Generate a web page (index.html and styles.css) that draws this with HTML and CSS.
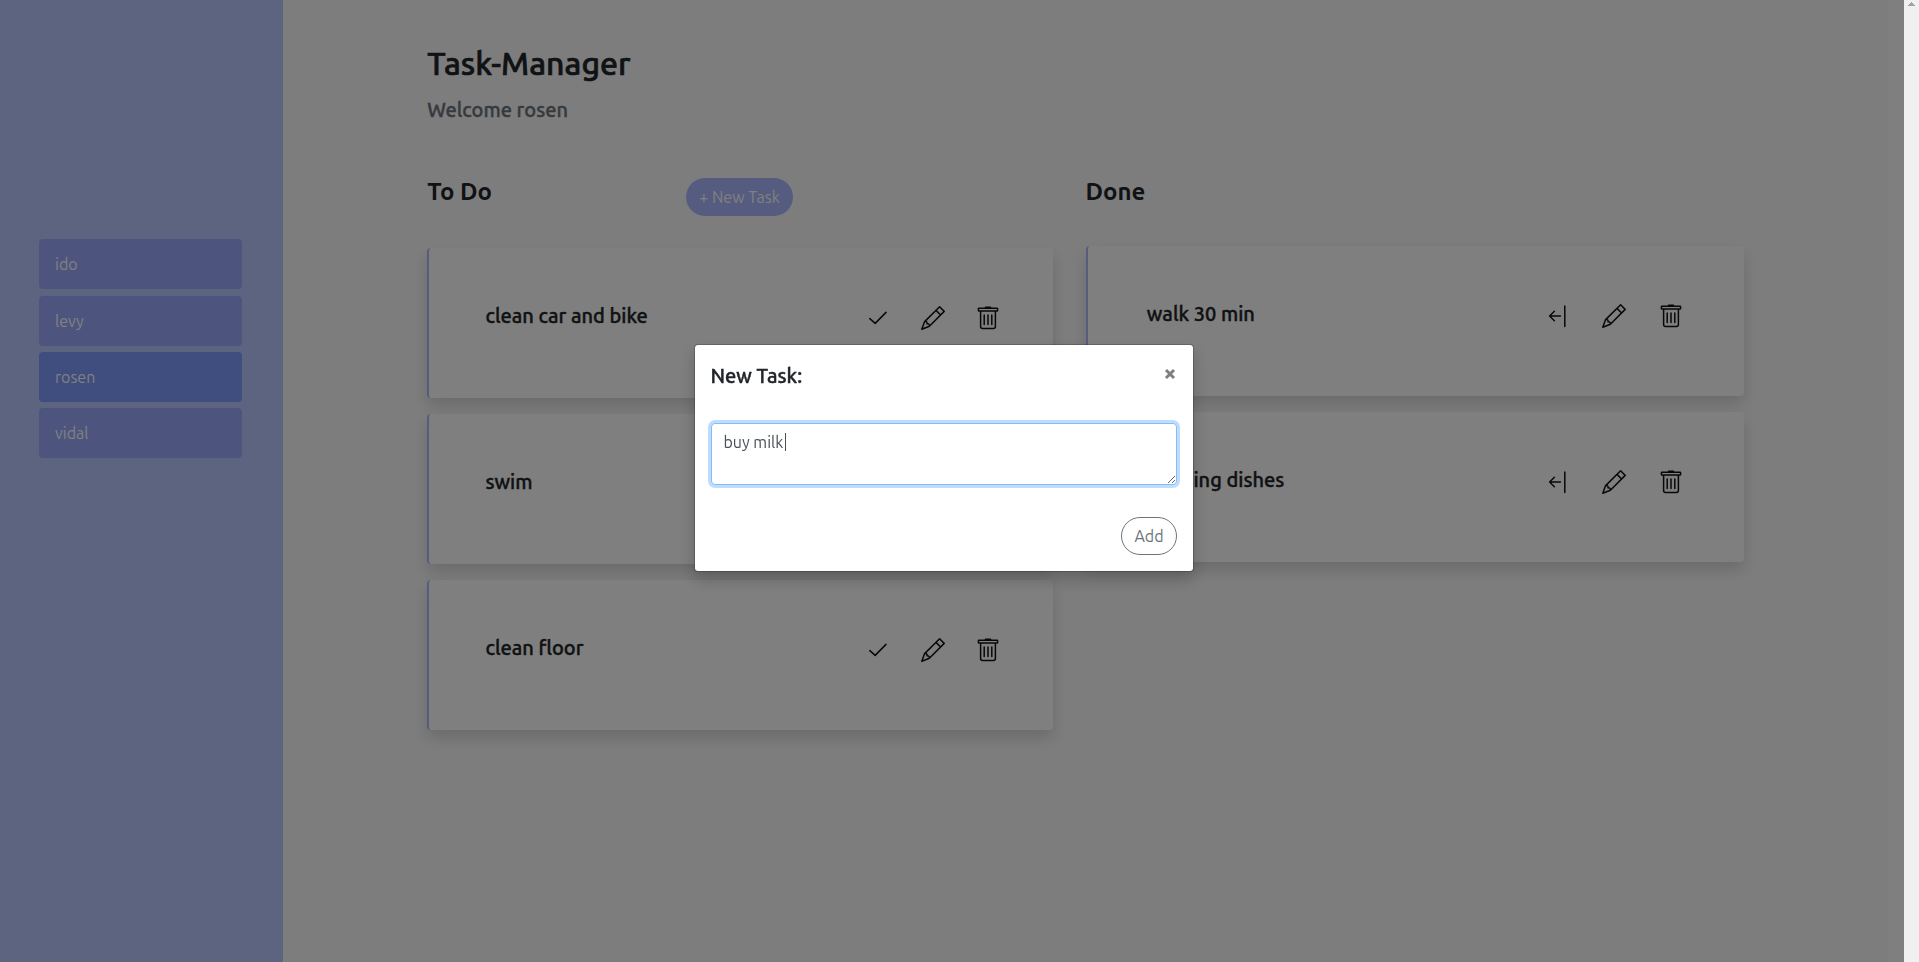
FILE: index.html
```
<!DOCTYPE html>
<html lang="en">
<head>
<meta charset="utf-8">
<title>Task-Manager</title>
<link rel="stylesheet" href="styles.css">
</head>
<body>
<svg class="sprite" aria-hidden="true">
  <symbol id="check" viewBox="0 0 24 24"><path d="M3.8 12.6 9.2 17.4 20 6.4"/></symbol>
  <symbol id="back" viewBox="0 0 24 24"><path d="M9.4 7.2 4.6 12l4.8 4.8M4.6 12H15.4M19.8 2v20.4"/></symbol>
  <symbol id="pencil" viewBox="0 0 24 24"><path d="M.8 23.2 3.6 15.6 18.6.8 23.2 5.4 8.4 20.2ZM15 4.4 19.6 9M3.6 15.6C6 15.4 6.2 16 6 17.8 7.8 17.8 8.6 18.2 8.4 20.2"/></symbol>
  <symbol id="trash" viewBox="0 0 24 24"><path d="M3 2.2H21Q21.6 2.2 21.6 2.8V4.4Q21.6 5 21 5H3Q2.4 5 2.4 4.4V2.8Q2.4 2.2 3 2.2ZM9.5 1.2H14.5M4.6 5.2V20.6Q4.6 22.6 6.6 22.6H17.4Q19.4 22.6 19.4 20.6V5.2M8.2 9V18.6M12 9V18.6M15.8 9V18.6"/></symbol>
</svg>
<div class="page">
  <nav class="sidebar">
    <a class="user" href="#">ido</a>
    <a class="user" href="#">levy</a>
    <a class="user active" href="#">rosen</a>
    <a class="user" href="#">vidal</a>
  </nav>
  <main class="main">
    <h1 class="title">Task-Manager</h1>
    <h2 class="welcome">Welcome rosen</h2>
    <div class="board">
      <section class="column todo">
        <header class="column-head">
          <h3 class="column-title">To Do</h3>
          <button class="new-task" type="button">+ New Task</button>
        </header>
        <ul class="tasks">
          <li class="card"><h4 class="task">clean car and bike</h4><div class="actions">
            <button class="action" type="button" aria-label="Done"><svg class="icon"><use href="#check"/></svg></button>
            <button class="action" type="button" aria-label="Edit"><svg class="icon"><use href="#pencil"/></svg></button>
            <button class="action" type="button" aria-label="Delete"><svg class="icon"><use href="#trash"/></svg></button></div></li>
          <li class="card"><h4 class="task">swim</h4><div class="actions">
            <button class="action" type="button" aria-label="Done"><svg class="icon"><use href="#check"/></svg></button>
            <button class="action" type="button" aria-label="Edit"><svg class="icon"><use href="#pencil"/></svg></button>
            <button class="action" type="button" aria-label="Delete"><svg class="icon"><use href="#trash"/></svg></button></div></li>
          <li class="card"><h4 class="task">clean floor</h4><div class="actions">
            <button class="action" type="button" aria-label="Done"><svg class="icon"><use href="#check"/></svg></button>
            <button class="action" type="button" aria-label="Edit"><svg class="icon"><use href="#pencil"/></svg></button>
            <button class="action" type="button" aria-label="Delete"><svg class="icon"><use href="#trash"/></svg></button></div></li>
        </ul>
      </section>
      <section class="column done">
        <header class="column-head">
          <h3 class="column-title">Done</h3>
        </header>
        <ul class="tasks">
          <li class="card"><h4 class="task">walk 30 min</h4><div class="actions">
            <button class="action" type="button" aria-label="Move back"><svg class="icon"><use href="#back"/></svg></button>
            <button class="action" type="button" aria-label="Edit"><svg class="icon"><use href="#pencil"/></svg></button>
            <button class="action" type="button" aria-label="Delete"><svg class="icon"><use href="#trash"/></svg></button></div></li>
          <li class="card"><h4 class="task">washing dishes</h4><div class="actions">
            <button class="action" type="button" aria-label="Move back"><svg class="icon"><use href="#back"/></svg></button>
            <button class="action" type="button" aria-label="Edit"><svg class="icon"><use href="#pencil"/></svg></button>
            <button class="action" type="button" aria-label="Delete"><svg class="icon"><use href="#trash"/></svg></button></div></li>
        </ul>
      </section>
    </div>
  </main>
</div>
<div class="overlay">
  <form class="modal" role="dialog" aria-labelledby="modal-title">
    <header class="modal-head">
      <h2 class="modal-title"><label id="modal-title" for="task-text">New Task:</label></h2>
      <button class="close" type="button" aria-label="Close"><svg class="close-icon" viewBox="0 0 10 10"><path d="M1 1 9 9M9 1 1 9"/></svg></button>
    </header>
    <div class="field">
      <textarea class="text" id="task-text" rows="2">buy milk</textarea>
      <span class="caret"></span>
    </div>
    <footer class="modal-foot"><button class="add" type="button">Add</button></footer>
  </form>
</div>
<div class="scrollbar"><svg class="scroll-arrow" viewBox="0 0 7 4"><path d="M3 0h1v1h1v1h1v1h1v1H0V3h1V2h1V1h1z"/></svg></div>
</body>
</html>
```
FILE: styles.css
```
* { box-sizing: border-box; }
body {
  margin: 0;
  overflow: hidden;
  background: #fff;
  color: #212529;
  font: 400 16px/24px Ubuntu, "Noto Sans", sans-serif;
}
h1, h2, h3, h4, ul { margin: 0; padding: 0; }
button { font: inherit; cursor: pointer; }
.sprite { display: none; }
.page { display: flex; min-height: 100vh; padding-right: 31px; }
.sidebar {
  width: 15%;
  padding: 239px 41px 0 39px;
  display: flex;
  flex-direction: column;
  gap: 6px;
  background: #bbc8ff;
}
.user {
  height: 50px;
  padding: 13px 16px;
  border-radius: 4px;
  background: #9aaaff;
  color: #fff;
  text-decoration: none;
}
.user:first-child { margin-bottom: 1px; }
.user.active { background: #7e9aff; }
.main { flex: 1; padding: 44px 144px 0; background: #fbfbfb; }
.title, .welcome, .task, .modal-title { font-weight: 500; -webkit-text-stroke: 0.02em currentColor; }
.title { font-size: 32px; line-height: 38px; }
.welcome { margin-top: 16px; font-size: 20px; line-height: 24px; color: #6c757d; }
.board { display: grid; grid-template-columns: 1fr 1fr; margin-top: 56px; }
.todo { padding-right: 33px; }
.column-head { display: flex; height: 68px; }
.todo .column-head { height: 70px; }
.column-title { width: 259px; font-size: 24px; line-height: 28px; font-weight: 700; }
.new-task {
  height: 38px;
  padding: 6px 13px;
  border: 0;
  border-radius: 19px;
  background: #aab8ff;
  color: #fff;
}
.tasks { list-style: none; display: grid; gap: 16px; }
.card {
  height: 150px;
  display: grid;
  grid-template-columns: 1fr 31%;
  padding: 56px 6% 0 9%;
  border-left: 2px solid #aab8ff;
  border-radius: 4px;
  background: #fff;
  box-shadow: 0 8px 16px rgba(0, 0, 0, .15);
}
.done .card { padding-right: 44px; }
.task { font-size: 20px; line-height: 24px; }
.actions { display: grid; grid-template-columns: repeat(3, 1fr); height: 28px; }
.action { padding: 0; border: 0; background: none; color: inherit; display: grid; place-items: center; }
.icon { width: 24px; height: 24px; fill: none; stroke: #111; stroke-width: 1.5; stroke-linejoin: round; stroke-linecap: round; }
.overlay { position: fixed; inset: 0; background: rgba(0, 0, 0, .5); }
.modal {
  position: absolute;
  top: 344px;
  left: calc(50% - 266px);
  width: 500px;
  padding: 16px;
  border: 1px solid rgba(0, 0, 0, .2);
  border-radius: 4px;
  background: #fff;
  background-clip: padding-box;
  box-shadow: 0 8px 16px rgba(0, 0, 0, .2);
}
.modal-head { display: flex; justify-content: space-between; align-items: flex-start; }
.modal-title { font-size: 20px; line-height: 30px; }
.close { padding: 8px 2px; border: 0; background: none; line-height: 0; }
.close-icon { width: 10px; height: 10px; stroke: #7f7f7f; stroke-width: 3; fill: none; overflow: visible; }
.field { position: relative; margin-top: 32px; }
.text {
  display: block;
  width: 100%;
  height: 62px;
  padding: 6px 12px;
  border: 1px solid #80bdff;
  border-radius: 4px;
  outline: 0;
  color: #495057;
  font: inherit;
  caret-color: transparent;
  box-shadow: 0 0 0 3px #bfdeff;
}
.caret { position: absolute; left: 74px; top: 10px; width: 1px; height: 18px; background: #495057; }
.modal-foot { display: flex; justify-content: flex-end; margin-top: 32px; }
.add {
  height: 38px;
  padding: 6px 12px;
  border: 1px solid #6c757d;
  border-radius: 19px;
  background: #fff;
  color: #6c757d;
}
.scrollbar { position: fixed; top: 0; right: 0; bottom: 0; width: 15px; background: #f0f0f0; }
.scroll-arrow { display: block; width: 7px; height: 4px; margin: 2px 4px; fill: #a3a3a3; }
```
